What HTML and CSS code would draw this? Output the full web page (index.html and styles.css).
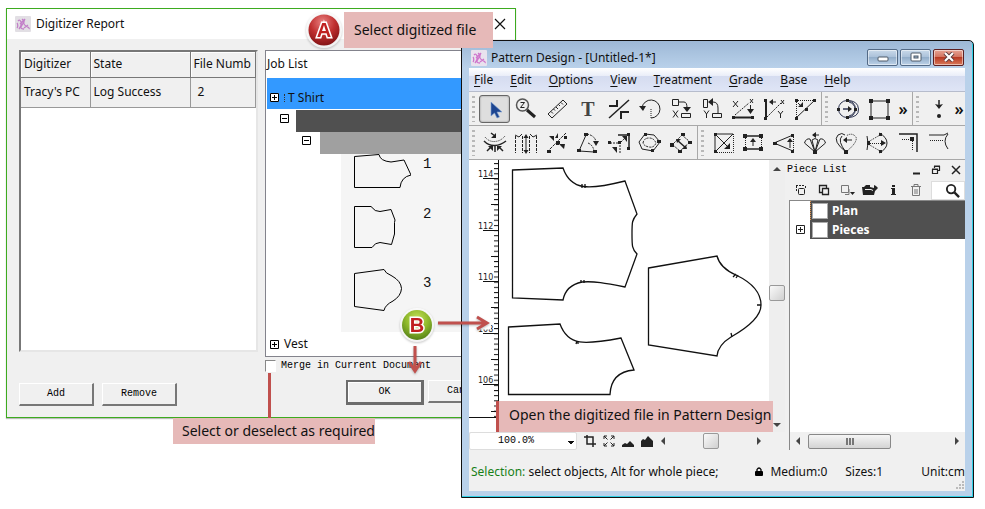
FILE: index.html
```html
<!DOCTYPE html>
<html lang="en">
<head>
<meta charset="utf-8">
<title>Digitizer Report</title>
<link rel="stylesheet" href="styles.css">
</head>
<body>
<main class="desktop">

<section class="report" aria-label="Digitizer Report">
  <header class="report-title">
    <svg class="logo" viewBox="0 0 16 16"><rect width="16" height="16" rx="1" fill="#e2dfe4"/><path d="M2 12c1-1 1-4 0-5M3 5q2-2 3 1T4 13M7 3q3 2 0 6t2 4M10 3q-3 5 1 7t3 3M5 8l5-5M9 12l4-3" fill="none" stroke="#c27fc8" stroke-width="1.300"/></svg>
    <h1>Digitizer Report</h1>
    <button class="plain" aria-label="Close"><svg width="12" height="12" viewBox="0 0 12 12"><path d="M1 1l10 10M11 1L1 11" stroke="#111" stroke-width="1.200"/></svg></button>
  </header>
  <div class="report-body">
    <div class="column">
      <div class="listbox">
        <table>
          <thead><tr><th>Digitizer</th><th>State</th><th>File Numb</th></tr></thead>
          <tbody><tr><td>Tracy's PC</td><td>Log Success</td><td class="num">2</td></tr></tbody>
        </table>
      </div>
      <div class="buttons">
        <button class="classic">Add</button>
        <button class="classic">Remove</button>
      </div>
    </div>
    <div class="column">
      <div class="jobs">
        <h2>Job List</h2>
        <div class="job selected"><button class="expander" aria-label="Expand"><svg viewBox="0 0 9 9"><path d="M.5.5h8v8h-8zM2 4.500h5M4.500 2v5"/></svg></button><span><i class="stitch"></i>T Shirt</span></div>
        <div class="size-row"><button class="expander" aria-label="Collapse"><svg viewBox="0 0 9 9"><path d="M.5.5h8v8h-8zM2 4.500h5"/></svg></button><span class="bar"></span></div>
        <div class="size-row inner"><button class="expander" aria-label="Collapse"><svg viewBox="0 0 9 9"><path d="M.5.5h8v8h-8zM2 4.500h5"/></svg></button><span class="bar"></span></div>
        <div class="previews">
          <div class="preview"><svg viewBox="0 0 70 45"><path d="M13.500 2.500L38 .500Q39 7 50 8L63 6L70 21Q60 23 59 33.500H13.500Z"/></svg><span>1</span></div>
          <div class="preview"><svg viewBox="0 0 70 45"><path d="M13.500 2.500H30Q34 8 39 7.500L50 5.500L54 16L53.500 18.500V30L50.500 40.500L39 38.500Q34 38.500 31 43.500H13.500Z"/></svg><span>2</span></div>
          <div class="preview"><svg viewBox="0 0 70 45"><path d="M13.500 6.500L43 2.500Q44 6 51 9Q60 14 60.500 21.500Q60 29 52 34Q44 38 43 43.500L13.500 39.500Z"/></svg><span>3</span></div>
        </div>
        <div class="job"><button class="expander" aria-label="Expand"><svg viewBox="0 0 9 9"><path d="M.5.5h8v8h-8zM2 4.500h5M4.500 2v5"/></svg></button><span>Vest</span></div>
      </div>
      <label class="merge"><input type="checkbox"> Merge in Current Document</label>
      <div class="buttons confirm">
        <button class="classic default">OK</button>
        <button class="classic">Cancel</button>
      </div>
    </div>
  </div>
</section>

<section class="design" aria-label="Pattern Design">
  <header class="design-title">
    <svg class="logo" viewBox="0 0 16 16"><rect width="16" height="16" rx="1" fill="#e9e2ee"/><path d="M2 12c1-1 1-4 0-5M3 5q2-2 3 1T4 13M7 3q3 2 0 6t2 4M10 3q-3 5 1 7t3 3M5 8l5-5M9 12l4-3" fill="none" stroke="#cf75cc" stroke-width="1.300"/></svg>
    <h1>Pattern Design - [Untitled-1*]</h1>
    <div class="controls">
      <button aria-label="Minimize"><svg viewBox="0 0 12 10"><rect x="1" y="5" width="10" height="4" rx="1" fill="#fff" stroke="#4e5a68"/></svg></button>
      <button aria-label="Maximize"><svg viewBox="0 0 12 10"><rect x="1" y="1" width="10" height="8" rx="1" fill="#fff" stroke="#4e5a68"/><rect x="4" y="4" width="4" height="2" fill="#9fb6cd" stroke="#4e5a68"/></svg></button>
      <button class="close" aria-label="Close"><svg viewBox="0 0 12 10"><path d="M2 1l8 8M10 1L2 9" stroke="#5b3a3c" stroke-width="4"/><path d="M2 1l8 8M10 1L2 9" stroke="#fff" stroke-width="2.200"/></svg></button>
    </div>
  </header>
  <div class="client">
    <nav class="menu">
      <button><u>F</u>ile</button><button><u>E</u>dit</button><button><u>O</u>ptions</button><button><u>V</u>iew</button><button><u>T</u>reatment</button><button><u>G</u>rade</button><button><u>B</u>ase</button><button><u>H</u>elp</button>
    </nav>

    <div class="toolbar">
      <div class="tools"><i class="grip"></i>
        <button class="active" aria-label="Select"><svg viewBox="0 0 24 24"><path d="M8 5v14l3.500-3 2.500 5 2.500-1-2.500-5h5z" fill="#1d4590" stroke="#7fa3d4" stroke-width=".6"/></svg></button>
        <button aria-label="Zoom"><svg viewBox="0 0 24 24"><circle cx="8.500" cy="8" r="6" fill="#eee" stroke="#555" stroke-width="1.500"/><path d="M6.500 5.500h4l-4 5h4"/><path d="M13 13l8 7" stroke-width="3"/></svg></button>
        <button aria-label="Measure"><svg viewBox="0 0 24 24"><path d="M3 17L18 3l4 4L7 21zM6 14.500l2 2M8.500 12l1.500 1.500M11 10l2 2M13.500 7.500l1.500 1.500M16 5.500l2 2"/></svg></button>
        <button aria-label="Text"><svg viewBox="0 0 24 24"><text x="12" y="19" text-anchor="middle" class="serif">T</text></svg></button>
        <button aria-label="Corner"><svg viewBox="0 0 24 24"><path d="M2 9h8V3M14 22v-7h8" stroke-width="2"/><path d="M2 21L22 3" stroke-width="1.500"/></svg></button>
        <button aria-label="Rotate"><svg viewBox="0 0 24 24"><path d="M4 11a9 9 0 1 1 9 10"/><path d="M13 12v9" class="dots"/><path d="M1 9h7l-3 5z" class="f"/></svg></button>
        <button aria-label="Mirror X"><svg viewBox="0 0 24 24"><path d="M3.500 2.500h6v6h-6zM10 5h5q3 0 3 6M4 13.500l5 7M9 13.500l-5 7M12.500 20.500h9v-4h-9z"/><path d="M14 10h8l-4 5z" class="f"/></svg></button>
        <button aria-label="Mirror Y"><svg viewBox="0 0 24 24"><path d="M3.500 2.500h4v8h-4zM10 5h3q5 0 5 6v5M4 13.500l2.500 3.500 2.500-3.500M6.500 17v4M12.500 20.500h9v-4h-9z"/><path d="M13 1v8L8 5z" class="f"/></svg></button>
        <button aria-label="Align X"><svg viewBox="0 0 24 24"><path d="M2 4l5 6M7 4l-5 6M19 2l3 4M22 2l-3 4"/><path d="M4 18L18 6" stroke-dasharray="2 1"/><path d="M3 20.500h18" stroke-width="2"/><path d="M19.500 8v4"/><path d="M16 12h7l-3.500 5zM1 19h3v3H1zM20 19h3v3h-3z" class="f"/></svg></button>
        <button aria-label="Align Y"><svg viewBox="0 0 24 24"><path d="M4 4v17" stroke-width="2"/><path d="M5 20L19 6" stroke-dasharray="2 1"/><path d="M9 5h5M19 3l3 4M22 3l-3 4M16 14l2.500 3 2.500-3M18.500 17v4"/><path d="M11 2v6L7 5zM2 2h3v3H2zM2 20h3v3H2z" class="f"/></svg></button>
        <button aria-label="Align diagonal"><svg viewBox="0 0 24 24"><path d="M3 3.500h19M3.500 3v18" class="dots"/><path d="M3 21L22 3"/><path d="M5 6l3 3"/><path d="M5 10h5V5zM2 2h3v3H2zM20 2h3v3h-3zM2 20h3v3H2zM12 11h3v3h-3z" class="f"/></svg></button>
      </div>
      <div class="tools"><i class="grip"></i>
        <button aria-label="Circle"><svg viewBox="0 0 24 24" class="navy"><circle cx="11" cy="12" r="8.500"/><path d="M11 3.500q11 0 11.500 8.500T11 20.500M13 5q6 2 6 7t-6 7"/><path d="M7 12h7" stroke-width="1.500"/><path d="M12 9v6l4-3zM1 11h3v3H1zM10 2h3v3h-3zM10 19h3v3h-3zM18 11h3v3h-3z" class="f"/></svg></button>
        <button aria-label="Rectangle"><svg viewBox="0 0 24 24"><path d="M4 4h17v17H4z"/><path d="M2 2h4v4H2zM19 2h4v4h-4zM2 19h4v4H2zM19 19h4v4h-4z" class="f"/></svg></button>
        <button class="more">»</button>
      </div>
      <div class="tools"><i class="grip"></i>
        <button aria-label="Point"><svg viewBox="0 0 24 24"><path d="M12 3v6" stroke-width="1.500"/><path d="M8 7l4 5 4-5-4 1z" class="f"/><circle cx="12" cy="19" r="2" class="f"/></svg></button>
        <button class="more">»</button>
      </div>
    </div>
    <div class="toolbar">
      <div class="tools"><i class="grip"></i>
        <button aria-label="Spread"><svg viewBox="0 0 24 24"><path d="M2 6q4 5 10 4.500T22 5" class="dots"/><path d="M1 10q5 5 11 4.500T23 10M4 20l4-4M12 21v-6M20 20l-4-4M8 2l4 3" stroke-width="1.500"/><path d="M5 15h5v5zM19 15h-5v5zM13 2v5H8z" class="f"/></svg></button>
        <button aria-label="Pleat"><svg viewBox="0 0 24 24"><path d="M1.500 5v17M8.500 5v17M15.500 5v17M22.500 5v17" stroke-dasharray="3 1"/><path d="M12 5v16M1 4l4 2 3-3M23 4l-4 2-3-3"/><path d="M9.500 7h5L12 3zM9.500 19h5L12 23z" class="f"/></svg></button>
        <button aria-label="Divide"><svg viewBox="0 0 24 24"><path d="M2 21L21 2" stroke-dasharray="3 1"/><path d="M4 5h5v5zM13 2v5h-3zM20 13h-6l5 5zM11 10h4v4h-4zM2 19h4v3H2zM19 5h3v3h-3z" class="f"/></svg></button>
        <button aria-label="Dart"><svg viewBox="0 0 24 24"><path d="M10 4L3 20l15 1"/><path d="M11 3q9 2 9 9M12 12q5 2 6 8" stroke-dasharray="2 1"/><path d="M17 10h6l-3 5zM8 2h4v3H8zM1 18h4v3H1zM17 19h4v3h-4z" class="f"/></svg></button>
        <button aria-label="Move corner"><svg viewBox="0 0 24 24"><path d="M11 4h11v14" stroke-width="1.500"/><path d="M3 12h10v10M14 11l5-5" stroke-dasharray="2 1"/><path d="M15 5h5v6zM5 16h5v6zM1 10h3v3H1zM11 10h3v3h-3zM20 2h3v3h-3zM20 16h3v3h-3z" class="f"/></svg></button>
        <button aria-label="Offset"><svg viewBox="0 0 24 24"><path d="M1 11L7 3l9 1 6 7-7 9-11-2z"/><path d="M5 12q1-5 6-5t7 5q-2 5-7 4t-6-4z" stroke-dasharray="2 1"/><path d="M8 12h7M19 9h4v3h-4zM6 2h3v3H6zM13 18h3v3h-3z" class="f"/></svg></button>
        <button aria-label="Parallel"><svg viewBox="0 0 24 24"><path d="M3 14L14 3M10 21l11-10M4 14l8 7M13 4l8 7" stroke-dasharray="2 1"/><path d="M8 9l9 8" stroke-width="1.500"/><path d="M7 8h5l-4 4zM18 18h-5l4-4zM1 12h4v4H1zM12 2h4v3h-4zM19 10h4v3h-4zM9 19h4v3H9z" class="f"/></svg></button>
      </div>
      <div class="tools"><i class="grip"></i>
        <button aria-label="Scale"><svg viewBox="0 0 24 24"><path d="M3 3h18L3 21zM5 5l11 11"/><path d="M3 21.500h18.500V3" class="dots"/><path d="M18 12v6h-6zM2 2h3v3H2zM2 19h3v3H2z" class="f"/></svg></button>
        <button aria-label="Extend"><svg viewBox="0 0 24 24"><path d="M2 5h20M2 18h20" stroke-width="1.500"/><path d="M4.500 5v15M20.500 5v15" class="dots"/><path d="M12 9v6"/><path d="M9 11h6l-3-4zM2 3h4v4H2zM18 3h4v4h-4zM2 16h4v4H2zM18 16h4v4h-4z" class="f"/></svg></button>
        <button aria-label="Triangle"><svg viewBox="0 0 24 24"><path d="M21 4L2 12l19 8"/><path d="M21.500 4v16" class="dots"/><path d="M18 9v8"/><path d="M15 11h6l-3-4zM1 11h4v3H1zM19 3h3v3h-3zM19 19h3v3h-3z" class="f"/></svg></button>
        <button aria-label="Fan"><svg viewBox="0 0 24 24"><path d="M12 21L1.500 12Q3 7 7 8l5 13 5-13q4-1 5.500 4zM12 21L9 9q3-3 6 0z"/><path d="M10 4h6"/><path d="M13 1v6L9 4zM10 19h4v4h-4z" class="f"/></svg></button>
        <button aria-label="Flare"><svg viewBox="0 0 24 24"><path d="M12 21Q-2 10 4 4q4-3 7 0M12 21Q3 10 8 5"/><path d="M12 21q12-10 10-15-4-5-10-1" class="dots"/><path d="M11 9h7"/><path d="M13 6v6L9 9zM10 19h4v4h-4z" class="f"/></svg></button>
        <button aria-label="Gather"><svg viewBox="0 0 24 24"><path d="M2 5q2 7 0 14M14 2q8 4 8 10t-8 10"/><path d="M3 11l12-7M3 12.500h15M3 13l12 7" class="dots"/><path d="M16 9l5 3-5 3zM2 10h3v4H2zM14 2h3v3h-3zM14 19h3v3h-3z" class="f"/></svg></button>
        <button aria-label="Seam corner"><svg viewBox="0 0 24 24"><path d="M3 3h18v18" stroke-width="1.500"/><path d="M6 8.500h10.500V20" class="dots"/><path d="M14 6h4v4h-4z" class="f"/></svg></button>
        <button aria-label="Seam end"><svg viewBox="0 0 24 24"><path d="M2 4h15l4-2"/><path d="M3 9.500h14" class="dots"/><path d="M21 3q-6 7 0 15"/></svg></button>
      </div>
    </div>

    <div class="workspace">
      <div class="drawing">
        <div class="canvas-row">
          <svg class="canvas" viewBox="0 0 300 272" preserveAspectRatio="xMinYMin slice" role="img" aria-label="Pattern pieces">
            <defs>
              <pattern id="minor" width="5" height="5.160" patternUnits="userSpaceOnUse" x="25" y="3"><path d="M0 .5h5" stroke="#111"/></pattern>
            </defs>
            <rect x="25" y="0" width="5" height="257" fill="url(#minor)"/>
            <path d="M29.500 0V257.500H0" class="rule"/>
            <path d="M14 18.500h15M14 70.500h15M14 121.500h15M14 173.500h15M14 224.500h15M22 44.500h7M22 96.500h7M22 147.500h7M22 199.500h7M22 251.500h7" class="rule"/>
            <g class="ticks"><text x="9" y="17">114</text><text x="9" y="69">112</text><text x="9" y="120">110</text><text x="9" y="172">108</text><text x="9" y="223">106</text></g>
            <path class="halo" d="M3 165h19"/>
            <g class="piece">
              <path d="M43.500 10L94 8C102 31 120 30 156 21L168 54C163 60 163 62 163 74S163 89 168 94L156 127C136 123 125 121 113 122C103 124 96 130 94 140L43.500 138Z"/>
              <path d="M113 24v4M116 24v4M112 120v3M115 120v3"/>
              <path d="M39.500 167L91 164C99 186 115 185 152 178L165 210Q142 212 141 234.500H39.500Z"/>
              <path d="M108 181l-1 3M109 182v2"/>
              <path d="M179.500 108L248 96Q251 108 267 115Q292 127 292 145Q292 160 262 177Q249 185 248 196L179.500 185Z"/>
              <path d="M267 114l-3 3M269 115l-2 3M288 145h4M263 177l-1-4"/>
            </g>
          </svg>
          <div class="vscroll"><i class="arrow up"></i><i class="thumb"></i><i class="arrow down"></i></div>
        </div>
        <div class="zoombar">
          <select aria-label="Zoom level"><option>100.0%</option></select>
          <button aria-label="Actual size"><svg viewBox="0 0 12 12"><path d="M3 0v9h9M0 2h9v10" stroke-width="1.500"/></svg></button>
          <button aria-label="Fit"><svg viewBox="0 0 12 12"><path d="M1 4V1h3M8 1h3v3M11 8v3H8M4 11H1V8M1 1l3.500 3.500M11 1L7.500 4.500M11 11L7.500 7.500M1 11l3.500-3.500"/></svg></button>
          <button aria-label="Small"><svg viewBox="0 0 12 12"><path d="M0 12v-2l3-2 2 1 3-3 4 4v2z" class="f"/></svg></button>
          <button aria-label="Large"><svg viewBox="0 0 12 12"><path d="M0 12V6l2-2 2 1 3-4 3 3 2 2v6z" class="f"/></svg></button>
          <div class="hscroll"><i class="arrow left"></i><i class="thumb"></i><i class="arrow right"></i></div>
        </div>
      </div>

      <aside class="dock">
        <header><h2>Piece List</h2>
          <button aria-label="Minimize"><svg viewBox="0 0 10 10"><path d="M2 8.500h7" stroke-width="2"/></svg></button>
          <button aria-label="Float"><svg viewBox="0 0 10 10"><path d="M3.500 3V1.500h5v4H7M1.500 4.500h5v4h-5zM3 1h6M1 4h6" stroke-width="1.200"/></svg></button>
          <button aria-label="Close"><svg viewBox="0 0 10 10"><path d="M1 1l8 8M9 1L1 9" stroke-width="1.500"/></svg></button>
        </header>
        <div class="dock-tools">
          <button aria-label="New"><svg viewBox="0 0 16 12"><path d="M3 1.500h9M3.500 2v6M12.500 2v2" stroke-dasharray="2 1"/><rect x="5.500" y="4.500" width="6" height="6" rx="1"/></svg></button>
          <button aria-label="Copy"><svg viewBox="0 0 16 12"><path d="M6 8.500H3.500v-7h7V4M6.500 4.500h6v6h-6z" stroke-width="1.300"/></svg></button>
          <button aria-label="Paste"><svg viewBox="0 0 16 12" class="dim"><path d="M2.500 1.500h7v7h-7zM6 10.500h4V5"/><path d="M11 8h5l-2.500 3z" class="f"/></svg></button>
          <button aria-label="Open"><svg viewBox="0 0 16 12"><path d="M0 3h2l2-2h4v2l4 1V1l2 1 2 2-3 3-1 4H1z" class="f"/><path d="M3 5.500h6l2 1" stroke="#eee"/></svg></button>
          <button aria-label="Info"><svg viewBox="0 0 16 12"><path d="M7 1h3v2H7zM6 4h4v6h1v1H6v-1h1V5H6z" class="f"/></svg></button>
          <button aria-label="Delete"><svg viewBox="0 0 16 12" class="dim"><path d="M3 2.500h10M6 2V.5h4V2M4.500 3v8.500h7V3M7 5v5M9 5v5"/></svg></button>
          <button class="search" aria-label="Search"><svg viewBox="0 0 16 16"><circle cx="6.500" cy="6.500" r="4.500" stroke-width="2"/><path d="M10 10l5 5" stroke-width="2.500"/></svg></button>
        </div>
        <div class="tree">
          <div class="node"><span class="gutter"></span><label class="current"><input type="checkbox">Plan</label></div>
          <div class="node"><span class="gutter"><button class="expander" aria-label="Expand"><svg viewBox="0 0 9 9"><path d="M.5.5h8v8h-8zM2 4.500h5M4.500 2v5"/></svg></button></span><label><input type="checkbox">Pieces</label></div>
          <div class="hscroll wide"><i class="arrow left"></i><i class="thumb grooved"></i><i class="arrow right"></i></div>
        </div>
      </aside>
    </div>

    <footer class="status">
      <span class="message"><b>Selection:</b> select objects, Alt for whole piece;</span>
      <span class="lock"><svg viewBox="0 0 8 9"><path d="M2 4V2.500q2-3 4 0V4" fill="none" stroke="#000" stroke-width="1.300"/><rect y="4" width="8" height="5" rx="1"/></svg></span>
      <span class="medium">Medium:0</span><span class="sizes">Sizes:1</span><span>Unit:cm</span>
      <svg class="resize" viewBox="0 0 9 9"><path d="M7 1h2M4 4h2M7 4h2M1 7h2M4 7h2M7 7h2" stroke="#bbb" stroke-width="2"/></svg>
    </footer>
  </div>
</section>

<p class="note note-select">Select digitized file</p>
<p class="note note-merge">Select or deselect as required</p>
<p class="note note-open">Open the digitized file in Pattern Design</p>
<i class="lead"></i>

<svg class="mark mark-a" viewBox="0 0 36 36" role="img" aria-label="A">
  <defs><radialGradient id="red" cx=".45" cy=".25" r=".8"><stop offset="0" stop-color="#e88080"/><stop offset=".5" stop-color="#c03030"/><stop offset="1" stop-color="#7c1012"/></radialGradient></defs>
  <circle cx="18" cy="18" r="18" fill="#fff" opacity=".8"/><circle cx="18" cy="18" r="15.500" fill="url(#red)"/><text x="18" y="25" class="letter">A</text>
</svg>
<svg class="mark mark-b" viewBox="0 0 36 36" role="img" aria-label="B">
  <defs><radialGradient id="green" cx=".5" cy=".3" r=".75"><stop offset="0" stop-color="#c6e35a"/><stop offset=".5" stop-color="#8fb92c"/><stop offset="1" stop-color="#4e7a16"/></radialGradient></defs>
  <circle cx="18" cy="18" r="17" fill="#fff" opacity=".8"/><circle cx="18" cy="18" r="15" fill="url(#green)"/><text x="18" y="25" class="letter">B</text>
</svg>
<svg class="mark pointer-right" viewBox="0 0 54 16"><path d="M1 8h48M40 2l10 6-10 6" fill="none" stroke="#c0504d" stroke-width="3"/></svg>
<svg class="mark pointer-down" viewBox="0 0 16 30"><path d="M8 1v24M2 17l6 9 6-9" fill="none" stroke="#c0504d" stroke-width="3"/></svg>
</main>
</body>
</html>
```

FILE: styles.css
```css
* { box-sizing: border-box; }
body {
  margin: 0;
  background: #fff;
  color: #111;
  font: 12px/16px "Noto Sans", sans-serif;
}
h1, h2, p { margin: 0; font-size: 12px; font-weight: 400; }
button { font: inherit; color: inherit; padding: 0; border: 0; background: none; }
svg { display: block; }
.desktop { position: relative; min-height: 509px; overflow: hidden; }
.logo { width: 16px; height: 16px; flex: none; }

/* Digitizer report dialog */
.report {
  position: absolute;
  left: 6px;
  top: 8px;
  width: 510px;
  background: #f0f0f0;
  border: 1px solid #3dab1f;
  box-shadow: 0 1px 1px #bbb;
}
.report-title {
  display: flex;
  align-items: center;
  gap: 5px;
  height: 30px;
  padding: 0 9px 0 8px;
  background: #fff;
}
.report-title h1 { flex: 1; }
.report-body {
  display: grid;
  grid-template-columns: 239px 1fr;
  gap: 7px;
  padding: 11px 0 11px 12px;
}
.listbox {
  height: 302px;
  background: #fff;
  border: 2px solid #e6e6e6;
  border-left-color: #777;
  border-top-color: #777;
}
table { width: 100%; border-collapse: collapse; table-layout: fixed; background: #f0f0f0; }
th, td {
  padding: 0 4px 0 3px;
  border: 1px solid #999;
  border-top: 0;
  border-left: 0;
  text-align: left;
  font-weight: 400;
  white-space: nowrap;
}
th { height: 25px; border-color: #777; box-shadow: inset 1px 1px #fff; }
td { height: 30px; }
th:first-child, td:first-child { width: 69px; }
th:nth-child(2), td:nth-child(2) { width: 100px; }
td.num { padding-left: 7px; }
.buttons { display: flex; gap: 8px; padding-top: 31px; }
.classic {
  width: 75px;
  height: 23px;
  font: 10px/12px "Liberation Mono", monospace;
  color: #000;
  background: #f0f0f0;
  border: 1px solid #fff;
  border-right: 2px solid #777;
  border-bottom: 2px solid #777;
}
.classic.default {
  width: 78px;
  height: 25px;
  border: 2px solid #6c6c6c;
  border-right-width: 3px;
  border-bottom-width: 3px;
  box-shadow: inset 1px 1px #fff;
}
.jobs { height: 307px; border: 1px solid #83838c; background: #fff; }
.jobs h2 { height: 27px; line-height: 26px; padding-left: 1px; }
.job { display: flex; align-items: center; gap: 5px; height: 24px; padding-left: 4px; }
.job.selected {
  height: 32px;
  margin-left: 1px;
  padding: 8px 0 0 3px;
  background: #39f;
  border-bottom: 1px solid #fff;
}
.stitch { display: inline-block; width: 3px; height: 8px; margin-right: 1px; border-left: 1px dotted #333; }
.expander { width: 9px; height: 9px; background: #fff; flex: none; }
.expander svg { width: 9px; height: 9px; fill: none; stroke: #000; }
.size-row { display: flex; height: 22px; padding-left: 14px; gap: 7px; }
.size-row .expander { margin-top: 4px; }
.size-row .bar { flex: 1; background: #505050; }
.size-row.inner { padding-left: 36px; gap: 9px; }
.size-row.inner .bar { background: #a0a0a0; }
.previews { height: 178px; margin-left: 75px; background: #f5f5f5; }
.preview { display: flex; height: 50px; gap: 12px; font: 14px/20px "Liberation Mono", monospace; }
.preview svg { width: 70px; height: 45px; fill: none; stroke: #000; }
.preview + .preview { height: 63px; }
.preview:last-child span { padding-top: 6px; }
.merge { display: flex; align-items: center; gap: 5px; height: 18px; font: 10px/12px "Liberation Mono", monospace; color: #000; }
.merge input {
  appearance: none;
  width: 11px;
  height: 12px;
  margin: 0;
  background: #fff;
  border: 1px solid #fff;
  border-top-color: #888;
  border-left-color: #888;
}
.confirm { gap: 4px; padding: 5px 0 0 81px; }

/* Pattern Design window */
.design {
  position: absolute;
  left: 461px;
  right: 11px;
  top: 40px;
  padding: 0 8px 6px 7px;
  background: #b9d1ea linear-gradient(#9db8d6, #b9d1ea) top / 100% 27px no-repeat;
  border: 1px solid #111;
  border-radius: 0 5px 0 0;
  box-shadow: inset -1px -1px #2fd0e6;
}
.design-title { display: flex; align-items: center; gap: 4px; height: 27px; padding-left: 2px; }
.design-title h1 { flex: 1; padding-top: 6px; }
.design-title .logo { margin-top: 6px; }
.controls { display: flex; gap: 2px; padding: 5px 1px 0 0; }
.controls button {
  display: grid;
  place-items: center;
  width: 31px;
  height: 17px;
  border: 1px solid #536a86;
  border-radius: 2px;
  background: linear-gradient(#c9d9ea, #a8bfd8 50%, #93aeca 50%, #bdd2e8);
  box-shadow: inset 0 0 0 1px #ffffff80;
}
.controls .close { border-color: #5e2022; background: linear-gradient(#e6a394, #d1705c 50%, #b83a24 50%, #d97a5a); }
.controls svg { width: 12px; height: 10px; }
.client { background: #f0f0f0; }
.menu {
  display: flex;
  gap: 17px;
  height: 24px;
  padding-left: 5px;
  background: linear-gradient(#fff, #e9edf8 35%, #d5dcf0 36%, #dfe5f6);
  border-bottom: 1px solid #b6bccc;
}
.menu u { text-underline-offset: 2px; }
.toolbar { display: flex; height: 34px; border-bottom: 1px solid #a8a8a8; }
.tools { display: flex; align-items: center; border-right: 1px solid #a8a8a8; }
.tools:last-child { flex: 1; border-right: 0; }
.tools:first-child { padding-right: 1px; }
.grip { width: 3px; height: 26px; margin: 0 4px 0 3px; background: repeating-linear-gradient(#b8b8b8 0 2px, transparent 2px 5px); }
.tools button { display: grid; place-items: center; flex: none; width: 31px; height: 28px; }
.tools .active { border: 1px solid #666; border-radius: 3px; background: #dedede; box-shadow: inset 0 0 2px #888; }
.tools .more { width: 18px; font-size: 16px; font-weight: 600; }
.tools:last-child .more { width: 14px; margin-left: auto; }
.tools:last-child .grip + button { margin-right: -2px; }
.tools svg { width: 24px; height: 24px; }
.tools svg, .zoombar svg, .dock svg { fill: none; stroke: #222; }
svg .f { fill: #222; stroke: none; }
svg .dots { stroke-dasharray: 1 1; }
svg .serif { font: 700 20px "Liberation Serif", serif; fill: #444; stroke: none; }
.tools .navy { stroke: #2c3350; }
.workspace { display: flex; }
.drawing { flex: 1; min-width: 0; }
.canvas-row { display: flex; height: 272px; }
.canvas { flex: 1; min-width: 0; height: 272px; background: #fff; }
.rule { fill: none; stroke: #111; }
.ticks { font: 8px "DejaVu Sans", sans-serif; fill: #222; }
.halo { stroke: #fff; stroke-width: 9; }
.piece { fill: none; stroke: #111; stroke-width: 1.300; }
.vscroll { display: flex; flex-direction: column; justify-content: space-between; align-items: center; width: 16px; padding: 7px 0 5px; background: #eee; }
.arrow { border: 4px solid transparent; }
.up { border-bottom-color: #444; border-top: 0; }
.down { border-top-color: #444; border-bottom: 0; }
.left { border-right-color: #444; border-left: 0; }
.right { border-left-color: #444; border-right: 0; }
.thumb { width: 16px; height: 16px; border: 1px solid #999; border-radius: 2px; background: linear-gradient(135deg, #fafafa, #d0d0d0); }
.vscroll .thumb { margin-bottom: 8px; }
.zoombar { display: flex; align-items: center; gap: 7px; height: 18px; }
.zoombar select {
  appearance: none;
  width: 108px;
  height: 18px;
  margin: 0;
  padding: 0 0 0 28px;
  border: 1px solid #ddd;
  border-radius: 2px;
  font: 10px/14px "Liberation Mono", monospace;
  color: #000;
  background: linear-gradient(45deg, transparent 50%, #111 50%) 97px 8px / 4px 4px no-repeat, linear-gradient(315deg, transparent 50%, #111 50%) 101px 8px / 4px 4px no-repeat, #fff;
}
.zoombar svg { width: 12px; height: 12px; }
.hscroll { display: flex; flex: 1; align-items: center; justify-content: space-between; padding: 0 24px 0 1px; }
.dock { display: flex; flex-direction: column; width: 180px; padding-left: 2px; }
.dock header { display: flex; align-items: center; gap: 10px; height: 20px; padding-right: 4px; }
.dock h2 { flex: 1; font: 10px/16px "Liberation Mono", monospace; color: #000; }
.dock header svg { width: 10px; height: 10px; }
.dock-tools { display: flex; align-items: center; gap: 7px; height: 20px; padding-left: 6px; }
.dock-tools svg { width: 16px; height: 12px; }
.dock-tools .search { display: grid; place-items: center; flex: 1; height: 19px; padding-left: 8px; background: #fff; border: 1px solid #ddd; }
.dock-tools .search svg { width: 15px; height: 15px; }
.dock .dim { stroke: #777; }
.tree { display: flex; flex-direction: column; flex: 1; margin-left: 2px; background: #fff; border: 1px solid #888; border-width: 1px 0 0 1px; }
.node { display: flex; height: 19px; font-weight: 700; color: #fff; }
.node label { display: flex; align-items: center; gap: 4px; flex: 1; padding-left: 2px; background: #505050; }
.node .current { padding-left: 1px; border-left: 1px dotted #e0924a; }
.node input { appearance: none; width: 16px; height: 16px; margin: 0; background: #fff; border: 1px solid #aaa; }
.gutter { display: grid; place-items: center; width: 20px; }
.hscroll.wide { flex: none; justify-content: flex-start; height: 18px; margin-top: auto; padding: 0 6px; background: #f0f0f0; }
.wide .grooved {
  width: 83px;
  height: 15px;
  margin: 0 auto 0 8px;
  border-color: #888;
  background: repeating-linear-gradient(90deg, #777 0 2px, transparent 2px 3px) center / 8px 7px no-repeat, linear-gradient(#f5f5f5, #d4d4d4);
}
.status { display: flex; align-items: center; height: 41px; padding: 2px 0 0 2px; position: relative; }
.message { flex: 1; }
.message b { font-weight: 400; color: #188018; }
.lock { width: 15px; }
.lock svg { width: 8px; height: 9px; }
.medium { margin-right: 18px; }
.sizes { margin-right: 38px; }
.resize { position: absolute; right: 1px; bottom: 1px; width: 9px; height: 9px; }

/* Callouts */
.note { position: absolute; background: #e6b9b8; color: #111; font-size: 14px; white-space: nowrap; }
.note-select { left: 344px; top: 12px; padding: 10px 17px 10px 10px; }
.note-merge { left: 173px; top: 418px; padding: 5px 0 5px 9px; }
.note-open { left: 496px; top: 401px; padding: 6px 2px 9px 10px; border-left: 3px solid #c0504d; }
.lead { position: absolute; left: 268px; top: 373px; width: 3px; height: 45px; background: #c0504d; }
.mark { position: absolute; filter: drop-shadow(0 1px 1px #0004); }
.mark-a { left: 306px; top: 12px; width: 36px; height: 36px; }
.mark-b { left: 399px; top: 307px; width: 36px; height: 36px; }
.letter { font: 700 20px "Liberation Sans", sans-serif; text-anchor: middle; fill: #c02020; stroke: #fff; stroke-width: 3; paint-order: stroke; }
.pointer-right { left: 437px; top: 315px; width: 54px; height: 16px; }
.pointer-down { left: 407px; top: 345px; width: 16px; height: 30px; }
```
